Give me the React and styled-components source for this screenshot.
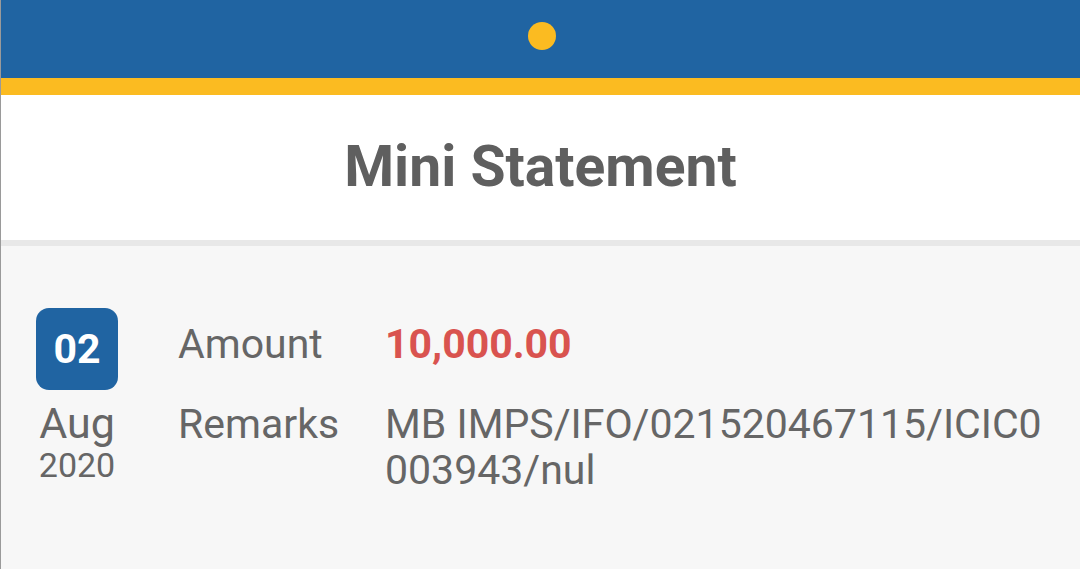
import React from "react";
import styled, { createGlobalStyle } from "styled-components";

const GlobalStyle = createGlobalStyle`
    html, body {
        margin: 0;
        padding: 0;
        background: #f7f7f7;
        font-family: Roboto, "Liberation Sans", sans-serif;
    }
`;

const App = () => {
    return (
        <>
        <GlobalStyle />
        <Screen>
            <TopBar>
                <Dot />
            </TopBar>
            <AccentBar />
            <Header>
                <Title>Mini Statement</Title>
            </Header>
            <Divider />
            <List>
                <Entry>
                    <DateColumn>
                        <DayBadge>02</DayBadge>
                        <Month>Aug</Month>
                        <Year>2020</Year>
                    </DateColumn>
                    <Details>
                        <Label>Amount</Label>
                        <Amount>10,000.00</Amount>
                        <Label>Remarks</Label>
                        <Value>MB IMPS/IFO/021520467115/ICIC0003943/nul</Value>
                    </Details>
                </Entry>
            </List>
        </Screen>
        </>
    );
};

const Screen = styled.div`
    width: 1080px;
    height: 569px;
    overflow: hidden;
    display: flex;
    flex-direction: column;
    background: #f7f7f7;
    border-left: 1px solid #9a9a9a;
    box-sizing: border-box;
`;

const TopBar = styled.div`
    height: 78px;
    background: #2064a2;
    display: flex;
    align-items: center;
    justify-content: center;
    padding-bottom: 6px;
    box-sizing: border-box;
`;

const Dot = styled.div`
    width: 28px;
    height: 28px;
    border-radius: 50%;
    background: #fbbb21;
    margin-left: 2px;
`;

const AccentBar = styled.div`
    height: 17px;
    background: #fbbb21;
`;

const Header = styled.div`
    height: 145px;
    background: #fff;
    display: flex;
    align-items: center;
    justify-content: center;
`;

const Title = styled.div`
    font-size: 57px;
    font-weight: bold;
    color: #5f5f5f;
    margin-top: -2px;
`;

const Divider = styled.div`
    height: 6px;
    background: #e8e8e8;
`;

const List = styled.div`
    flex: 1;
    padding: 62px 0 0 35px;
`;

const Entry = styled.div`
    display: flex;
    gap: 60px;
`;

const DateColumn = styled.div`
    display: flex;
    flex-direction: column;
    align-items: center;
    width: 82px;
`;

const DayBadge = styled.div`
    width: 82px;
    height: 82px;
    border-radius: 13px;
    background: #2064a2;
    color: #fff;
    font-size: 41px;
    font-weight: bold;
    display: flex;
    align-items: center;
    justify-content: center;
`;

const Month = styled.div`
    font-size: 43px;
    color: #666;
    line-height: 48px;
    margin-top: 9px;
`;

const Year = styled.div`
    font-size: 34px;
    color: #666;
    line-height: 38px;
    margin-top: -1px;
`;

const Details = styled.div`
    display: grid;
    grid-template-columns: 207px 675px;
    row-gap: 34px;
    align-content: start;
    padding-top: 13px;
`;

const Label = styled.div`
    font-size: 41px;
    color: #666;
    line-height: 46px;
`;

const Amount = styled.div`
    font-size: 41px;
    font-weight: bold;
    color: #d9534f;
    line-height: 46px;
`;

const Value = styled.div`
    font-size: 41px;
    color: #666;
    line-height: 46px;
    word-break: break-all;
`;

export default App;
